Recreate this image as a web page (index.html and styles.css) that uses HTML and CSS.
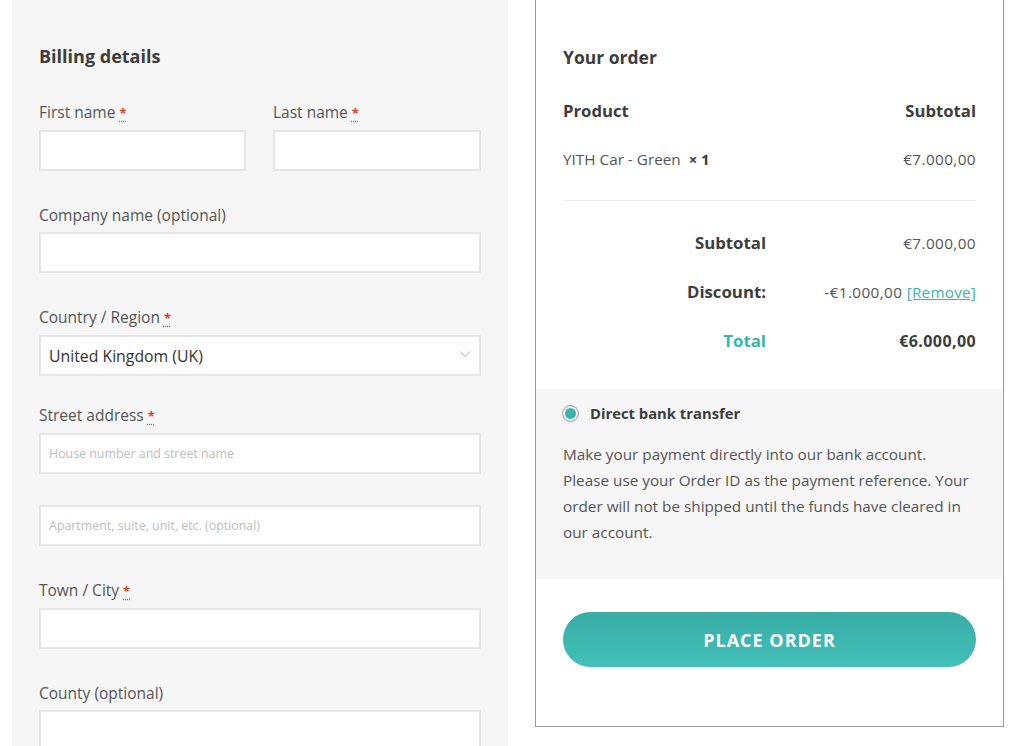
FILE: index.html
```html
<!DOCTYPE html>
<html lang="en">
<head>
<meta charset="utf-8">
<title>Checkout</title>
<link rel="stylesheet" href="styles.css">
</head>
<body>
<div class="page">
  <section class="billing">
    <h3 class="title">Billing details</h3>
    <div class="row-2">
      <div class="field">
        <label class="label">First name <abbr class="req" title="required">*</abbr></label>
        <div class="input"></div>
      </div>
      <div class="field">
        <label class="label">Last name <abbr class="req" title="required">*</abbr></label>
        <div class="input"></div>
      </div>
    </div>
    <div class="field">
      <label class="label">Company name (optional)</label>
      <div class="input"></div>
    </div>
    <div class="field field-select">
      <label class="label">Country / Region <abbr class="req" title="required">*</abbr></label>
      <div class="input select">
        <span class="select-value">United Kingdom (UK)</span>
        <svg class="chev" width="12" height="8" viewBox="0 0 12 8"><path d="M1 1.5 L6 6.5 L11 1.5" fill="none" stroke="#aaa" stroke-width="1"/></svg>
      </div>
    </div>
    <div class="field">
      <label class="label">Street address <abbr class="req" title="required">*</abbr></label>
      <div class="input"><span class="ph">House number and street name</span></div>
      <div class="input second"><span class="ph">Apartment, suite, unit, etc. (optional)</span></div>
    </div>
    <div class="field">
      <label class="label">Town / City <abbr class="req" title="required">*</abbr></label>
      <div class="input"></div>
    </div>
    <div class="field">
      <label class="label">County (optional)</label>
      <div class="input"></div>
    </div>
  </section>

  <section class="order">
    <div class="order-inner">
      <h3 class="title">Your order</h3>
      <div class="o-head">
        <span>Product</span>
        <span>Subtotal</span>
      </div>
      <div class="o-item">
        <span>YITH Car - Green&nbsp; <strong class="qty">× 1</strong></span>
        <span class="num">€7.000,00</span>
      </div>
      <div class="totals">
        <div class="t-row">
          <span class="t-label">Subtotal</span>
          <span class="t-val num">€7.000,00</span>
        </div>
        <div class="t-row">
          <span class="t-label">Discount:</span>
          <span class="t-val num">-€1.000,00 <a class="remove" href="#">[Remove]</a></span>
        </div>
        <div class="t-row">
          <span class="t-label total">Total</span>
          <span class="t-val num strong">€6.000,00</span>
        </div>
      </div>
    </div>
    <div class="payment">
      <div class="pay-method">
        <span class="radio"></span>
        <span class="pay-name">Direct bank transfer</span>
      </div>
      <p class="pay-desc">Make your payment directly into our bank account. Please use your Order ID as the payment reference. Your order will not be shipped until the funds have cleared in our account.</p>
    </div>
    <div class="place">
      <button class="btn">PLACE ORDER</button>
    </div>
  </section>
</div>
</body>
</html>
```

FILE: styles.css
```css
* { box-sizing: border-box; }
html, body { margin: 0; padding: 0; background: #fff; }
body {
  font-family: "Open Sans", "Liberation Sans", sans-serif;
  color: #444;
  height: 746px;
  overflow: hidden;
}
.page {
  display: flex;
  align-items: flex-start;
  padding-left: 12px;
  gap: 27px;
}
.billing {
  width: 496px;
  min-height: 900px;
  background: #f6f6f6;
  padding: 44px 27px 0;
}
.title {
  margin: 0;
  font-size: 18px;
  line-height: 24px;
  font-weight: 700;
  color: #3d3d3d;
}
.billing .title { margin-bottom: 33px; }
.row-2 {
  display: grid;
  grid-template-columns: 207px 208px;
  gap: 27px;
}
.field { margin-bottom: 33px; }
.field-select { margin-bottom: 28px; }
.label {
  display: block;
  font-size: 15.5px;
  line-height: 22px;
  color: #555;
  margin-bottom: 6px;
}
.req {
  color: #e2401c;
  text-decoration: underline dotted;
  text-underline-offset: 3px;
  border: none;
  font-weight: 700;
  font-size: 13px;
}
.input {
  height: 41px;
  background: #fff;
  border: 2px solid #e6e6e6;
  display: flex;
  align-items: center;
  padding: 0 8px;
}
.input.second { margin-top: 31px; }
.select { justify-content: space-between; padding-right: 8px; }
.select-value { font-size: 15.8px; color: #333; }
.chev { display: block; margin-top: -4px; }
.ph { font-size: 12.4px; color: #bdbdbd; }

.order {
  width: 469px;
  border: 1px solid #9a9a9a;
  border-top: none;
  background: #fff;
  padding-bottom: 59px;
}
.order-inner { padding: 45px 27px 0; }
.order .title { font-size: 17.5px; }
.o-head {
  margin-top: 16px;
  height: 50px;
  display: flex;
  justify-content: space-between;
  align-items: center;
  font-weight: 700;
  font-size: 16.7px;
  color: #3d3d3d;
}
.o-item {
  display: flex;
  justify-content: space-between;
  align-items: center;
  height: 66px;
  padding-bottom: 18px;
  border-bottom: 1px solid #ececec;
  font-size: 15.3px;
  color: #555;
}
.num { letter-spacing: 0.4px; font-size: 15.3px; }
.qty { color: #3d3d3d; font-size: 15px; }
.totals { padding: 17px 0 24px; }
.t-row {
  display: flex;
  align-items: center;
  height: 49px;
}
.t-label {
  width: 203px;
  text-align: right;
  font-weight: 700;
  font-size: 16.8px;
  color: #3d3d3d;
}
.t-label.total { color: #3bb3ac; }
.t-val {
  flex: 1;
  text-align: right;
  color: #555;
}
.t-val.strong { font-weight: 700; color: #3d3d3d; font-size: 16px; }
.remove { color: #3bb3ac; text-decoration: underline; letter-spacing: 0.2px; }

.payment {
  background: #f6f6f6;
  padding: 13px 27px 34px;
}
.pay-method {
  display: flex;
  align-items: center;
  height: 22px;
}
.radio {
  width: 17px;
  height: 17px;
  border-radius: 50%;
  border: 1px solid #b0b0b0;
  background: #3bb3ac;
  box-shadow: inset 0 0 0 2px #fff;
  margin-left: -1px;
  margin-right: 11px;
}
.pay-name {
  font-weight: 700;
  font-size: 14.8px;
  color: #3d3d3d;
}
.pay-desc {
  margin: 17px 0 0;
  font-size: 15.3px;
  line-height: 26px;
  color: #555;
}
.place { padding: 33px 27px 0; }
.btn {
  display: block;
  width: 100%;
  height: 55px;
  border: none;
  border-radius: 28px;
  background: linear-gradient(#38aca5, #42c0b9);
  color: #fff;
  font-family: inherit;
  font-weight: 700;
  font-size: 18px;
  letter-spacing: 1px;
}
```
